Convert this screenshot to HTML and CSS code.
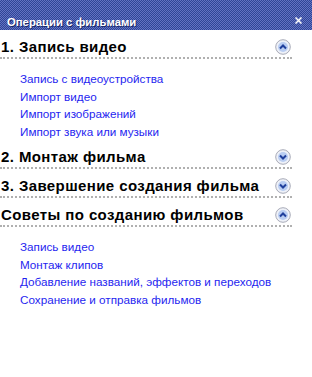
FILE: index.html
```html
<!DOCTYPE html>
<html lang="ru">
<head>
  <meta charset="UTF-8">
  <title>Операции с фильмами</title>
  <link rel="stylesheet" href="styles.css">
</head>
<body>

<div class="panel">
  <div class="titlebar">
    <span class="title">Операции с фильмами</span>
    <svg class="close" width="7" height="7" viewBox="0 0 7 7">
      <path d="M0.5 0.5 L6.5 6.5 M6.5 0.5 L0.5 6.5" stroke="#fff" stroke-width="1.5"/>
    </svg>
  </div>

  <div class="tasks">
    <div class="group">
      <div class="group-head">
        <span>1. Запись видео</span>
        <svg class="toggle" width="16" height="16" viewBox="0 0 16 16">
          <circle cx="8" cy="8" r="7.3" fill="#eef1f8" stroke="#a9abb8"/>
          <circle cx="8" cy="8" r="5" fill="#b9cdf2"/>
          <path d="M5 9.5 L8 6.5 L11 9.5" fill="none" stroke="#1f3f9c" stroke-width="2"/>
        </svg>
      </div>
      <ul class="links">
        <li><a href="#">Запись с видеоустройства</a></li>
        <li><a href="#">Импорт видео</a></li>
        <li><a href="#">Импорт изображений</a></li>
        <li><a href="#">Импорт звука или музыки</a></li>
      </ul>
    </div>

    <div class="group">
      <div class="group-head">
        <span>2. Монтаж фильма</span>
        <svg class="toggle" width="16" height="16" viewBox="0 0 16 16">
          <circle cx="8" cy="8" r="7.3" fill="#eef1f8" stroke="#a9abb8"/>
          <circle cx="8" cy="8" r="5" fill="#b9cdf2"/>
          <path d="M5 6.5 L8 9.5 L11 6.5" fill="none" stroke="#1f3f9c" stroke-width="2"/>
        </svg>
      </div>
    </div>

    <div class="group">
      <div class="group-head">
        <span>3. Завершение создания фильма</span>
        <svg class="toggle" width="16" height="16" viewBox="0 0 16 16">
          <circle cx="8" cy="8" r="7.3" fill="#eef1f8" stroke="#a9abb8"/>
          <circle cx="8" cy="8" r="5" fill="#b9cdf2"/>
          <path d="M5 6.5 L8 9.5 L11 6.5" fill="none" stroke="#1f3f9c" stroke-width="2"/>
        </svg>
      </div>
    </div>

    <div class="group">
      <div class="group-head">
        <span>Советы по созданию фильмов</span>
        <svg class="toggle" width="16" height="16" viewBox="0 0 16 16">
          <circle cx="8" cy="8" r="7.3" fill="#eef1f8" stroke="#a9abb8"/>
          <circle cx="8" cy="8" r="5" fill="#b9cdf2"/>
          <path d="M5 9.5 L8 6.5 L11 9.5" fill="none" stroke="#1f3f9c" stroke-width="2"/>
        </svg>
      </div>
      <ul class="links">
        <li><a href="#">Запись видео</a></li>
        <li><a href="#">Монтаж клипов</a></li>
        <li><a href="#">Добавление названий, эффектов и переходов</a></li>
        <li><a href="#">Сохранение и отправка фильмов</a></li>
      </ul>
    </div>
  </div>
</div>

</body>
</html>
```

FILE: styles.css
```css
body {
  font-family: 'Liberation Sans', Arial, sans-serif;
  margin: 0;
  padding: 0;
  background-color: #fff;
}

.panel {
  width: 312px;
}

/* полоса заголовка с "растровой" заливкой */
.titlebar {
  height: 30px;
  display: flex;
  align-items: flex-end;
  justify-content: space-between;
  padding: 0 10px 1px 7px;
  box-sizing: border-box;
  background-color: #4a5aa8;
  background-image: repeating-conic-gradient(#2f4596 0 25%, #6272c2 0 50%);
  background-size: 2px 2px;
}

.title {
  color: #fff;
  font-size: 11.3px;
  font-weight: bold;
  line-height: 14px;
  text-shadow: 1px 1px 0 #1c2a6a;
}

.close {
  margin-bottom: 5px;
}

.tasks {
  width: 292px;
}

.group-head {
  height: 29px;
  box-sizing: border-box;
  display: flex;
  align-items: flex-end;
  justify-content: space-between;
  padding: 0 1px 2px 1px;
  border-bottom: 2px dotted #b0b0b0;
  font-size: 15px;
  font-weight: bold;
  line-height: 17px;
  letter-spacing: 0.4px;
  color: #000;
}

.toggle {
  margin-bottom: 0;
}

.links {
  list-style: none;
  margin: 0;
  padding: 11px 0 0 20px;
}

.links li {
  font-size: 11.7px;
  line-height: 17.5px;
}

.links a {
  color: #1f1ff0;
  text-decoration: none;
}
```
